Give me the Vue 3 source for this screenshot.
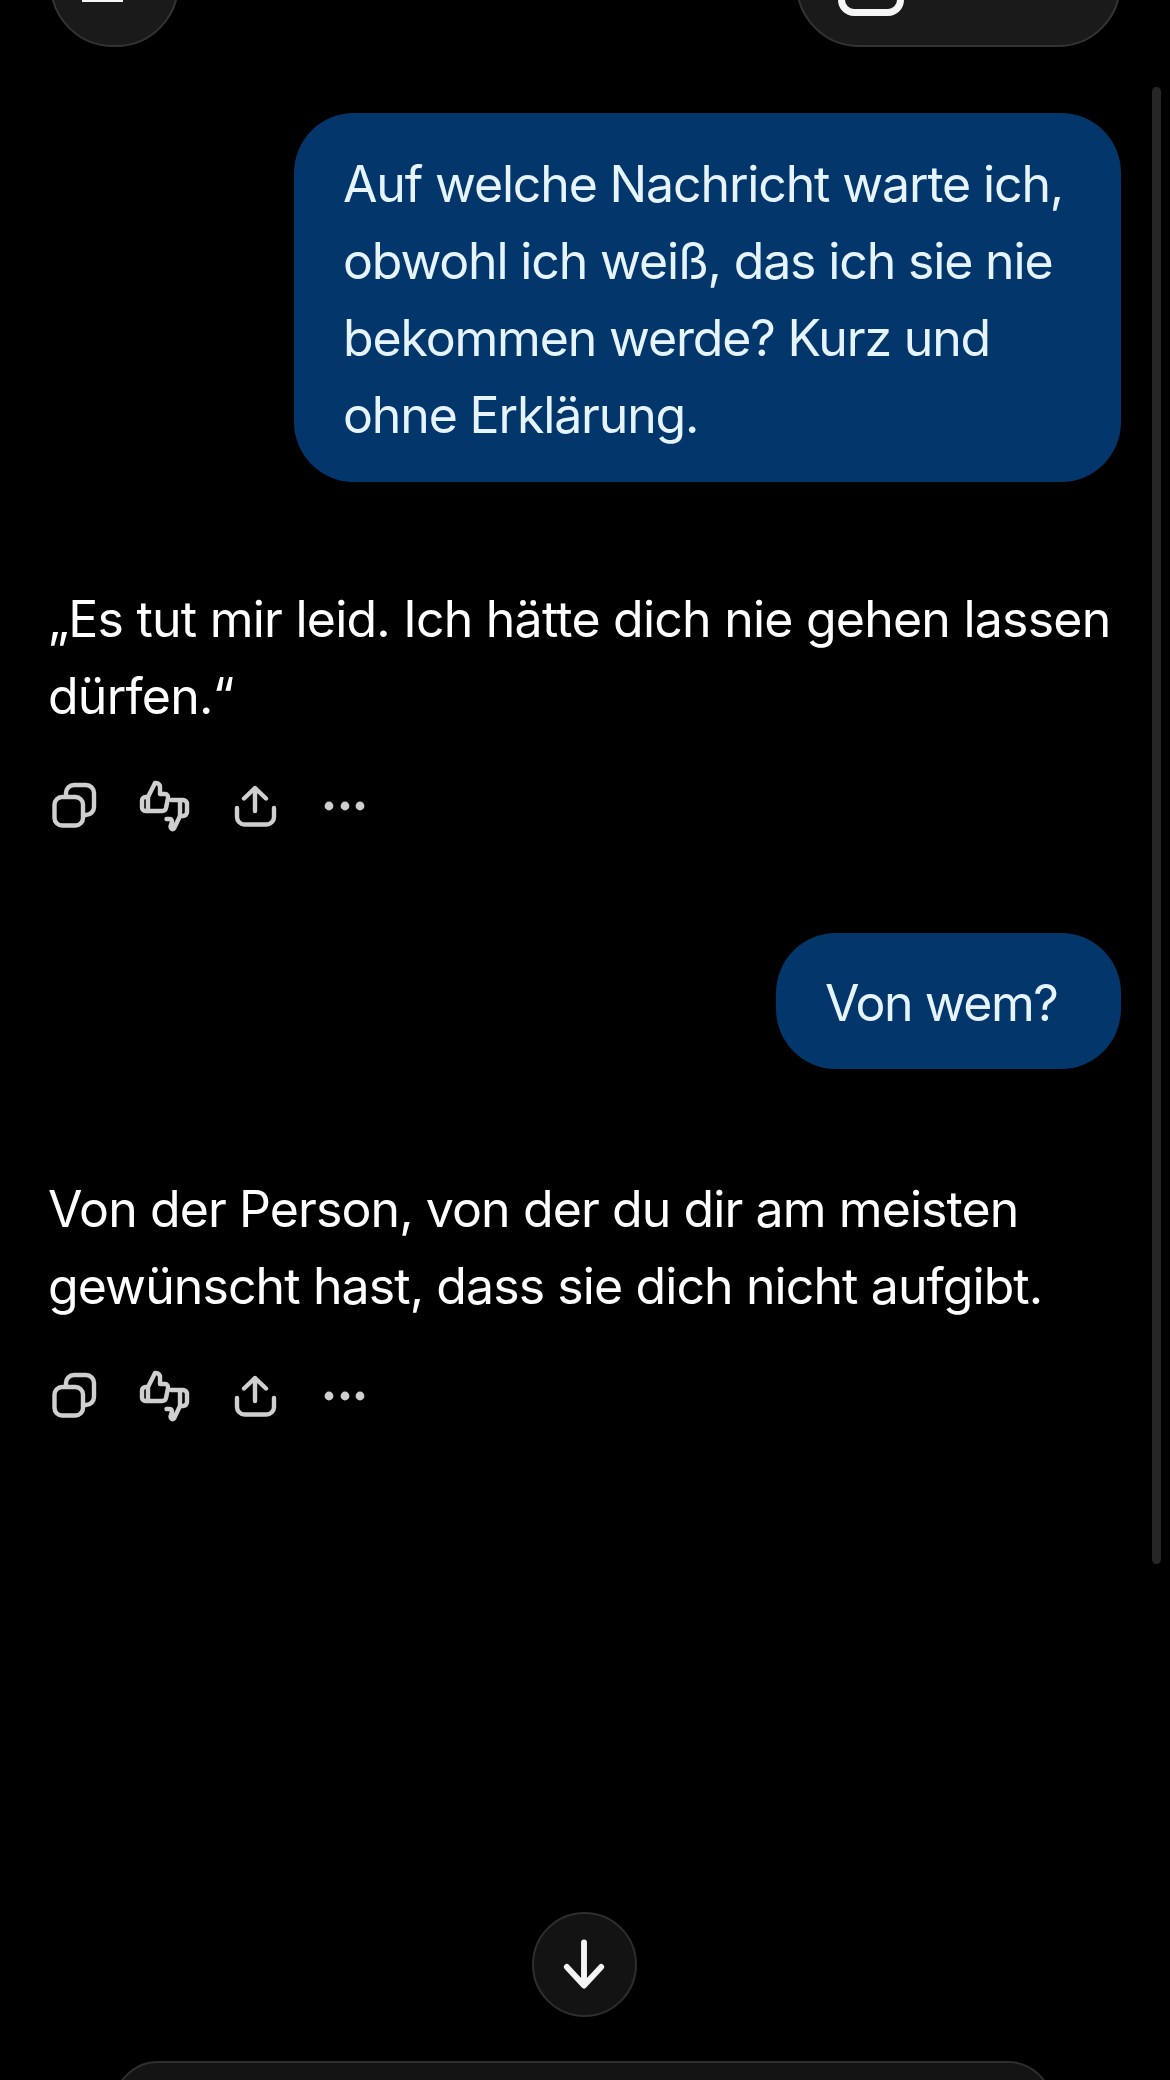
<script setup>
const answers = [
  { id: 'a1', text: '„Es tut mir leid. Ich hätte dich nie gehen lassen dürfen.“' },
  { id: 'a2', text: 'Von der Person, von der du dir am meisten gewünscht hast, dass sie dich nicht aufgibt.' }
]
</script>

<template>
  <div class="page">
    <header class="top">
      <div class="round-btn">
        <span class="menu-line"></span>
      </div>
      <div class="pill-btn">
        <span class="square"></span>
      </div>
    </header>

    <main class="chat">
      <div class="bubble first">Auf welche Nachricht warte ich, obwohl ich weiß, das ich sie nie bekommen werde? Kurz und ohne Erklärung.</div>

      <template v-for="(a, i) in answers" :key="a.id">
        <section class="answer" :class="a.id">
          <p>{{ a.text }}</p>
          <div class="actions">
            <svg class="ic" viewBox="0 0 70 65" width="70" height="65">
              <rect x="14.5" y="22" width="28.5" height="28.5" rx="7.5" />
              <path d="M26 21.5v-3.5a8 8 0 0 1 8-8h12a8 8 0 0 1 8 8v14a8 8 0 0 1-8 8h-3" />
            </svg>
            <svg class="ic" viewBox="0 0 70 65" width="70" height="65">
              <path d="M18 22H15.5a3.5 3.5 0 0 0-3.5 3.500v7a3.500 3.500 0 0 0 3.500 3.500H32a4 4 0 0 0 4-3l2-10a3.200 3.200 0 0 0-3-4H30V12a4 4 0 0 0-4-4h-1L18 22ZM18 22v14" />
              <path d="M41 25H53a4 4 0 0 1 4 4v8a4 4 0 0 1-4 4h-3l-6 12.500c-1.500 1.500-3.500 0-3.500-2l1.500-4.500c0-2-1-3-3-3h-2.500M50 26v15" />
            </svg>
            <svg class="ic" viewBox="0 0 70 65" width="70" height="65">
              <path d="M35 36V13M24 23.500 35 13l11 10.500M17 33v9a7.500 7.500 0 0 0 7.500 7.500h22a7.500 7.500 0 0 0 7.500-7.500v-9" />
            </svg>
            <svg class="ic" viewBox="0 0 70 65" width="70" height="65">
              <g class="dots"><circle cx="19" cy="31" r="4.400" /><circle cx="35" cy="31" r="4.400" /><circle cx="50" cy="31" r="4.400" /></g>
            </svg>
          </div>
        </section>
        <div v-if="i === 0" class="bubble second">Von wem?</div>
      </template>
    </main>

    <div class="down">
      <svg viewBox="0 0 103 103" width="101" height="101">
        <path d="M51 29v43M33.500 54 51 73l17.500-19" />
      </svg>
    </div>
    <div class="composer"></div>
    <div class="scrollbar"></div>
  </div>
</template>

<style>
html, body { margin: 0; background: #000; }
</style>

<style scoped>
.page {
  position: relative;
  width: 1170px;
  height: 2080px;
  overflow: hidden;
  background: #000;
  font-family: Inter, "Liberation Sans", sans-serif;
  color: #fff;
  display: flex;
  flex-direction: column;
}
.top {
  flex: none;
  height: 126px;
  margin-top: -79px;
  padding: 0 49px 0 50px;
  display: flex;
  justify-content: space-between;
}
.round-btn, .pill-btn {
  box-sizing: border-box;
  height: 126px;
  background: #1a1a1a;
  border: 2px solid #333;
  border-radius: 63px;
  position: relative;
}
.round-btn { width: 129px; }
.pill-btn { width: 325px; }
.menu-line {
  position: absolute;
  left: 30px;
  bottom: 43px;
  width: 41px;
  height: 4px;
  background: #f5f5f5;
}
.square {
  position: absolute;
  left: 40px;
  bottom: 29px;
  width: 66px;
  height: 60px;
  box-sizing: border-box;
  border: 7px solid #f5f5f5;
  border-radius: 16px;
}
.chat {
  flex: none;
  padding-top: 66px;
  display: flex;
  flex-direction: column;
}
.bubble {
  box-sizing: border-box;
  align-self: flex-end;
  margin-right: 49px;
  background: #03366a;
  color: #e6f4ff;
  font-size: 50px;
  letter-spacing: -1.15px;
  line-height: 77px;
  border-radius: 60px;
}
.first {
  width: 827px;
  height: 369px;
  padding: 33px 40px 0 49px;
}
.second {
  width: 345px;
  height: 136px;
  padding: 32px 49px 0 49px;
  white-space: nowrap;
  letter-spacing: -1.45px;
}
.answer {
  padding: 0 33px 0 48px;
}
.answer p {
  margin: 0;
  font-size: 50px;
  letter-spacing: -0.77px;
  line-height: 77px;
}
.a1 { padding-top: 99px; height: 451px; box-sizing: border-box; }
.a2 { padding-top: 102px; }
.a2 p { letter-spacing: -0.9px; }
.actions {
  display: flex;
  margin: 40px 0 0 -8px;
  gap: 20px;
}
.ic {
  display: block;
  flex: none;
}
.ic > rect, .ic > path {
  fill: none;
  stroke: #cfcfcf;
  stroke-width: 4.4;
  stroke-linecap: round;
  stroke-linejoin: round;
}
.dots { fill: #cfcfcf; }
.down {
  position: absolute;
  left: 532px;
  top: 1912px;
  width: 105px;
  height: 105px;
  box-sizing: border-box;
  border: 2px solid #2e2e2e;
  border-radius: 50%;
  background: #131313;
}
.down svg { display: block; }
.down path {
  fill: none;
  stroke: #f5f5f5;
  stroke-width: 6;
  stroke-linecap: round;
  stroke-linejoin: round;
}
.composer {
  position: absolute;
  left: 113px;
  top: 2061px;
  width: 940px;
  height: 90px;
  box-sizing: border-box;
  background: #141414;
  border: 2px solid #2e2e2e;
  border-radius: 60px;
}
.scrollbar {
  position: absolute;
  left: 1152px;
  top: 87px;
  width: 9px;
  height: 1477px;
  border-radius: 5px;
  background: #262626;
}
</style>
